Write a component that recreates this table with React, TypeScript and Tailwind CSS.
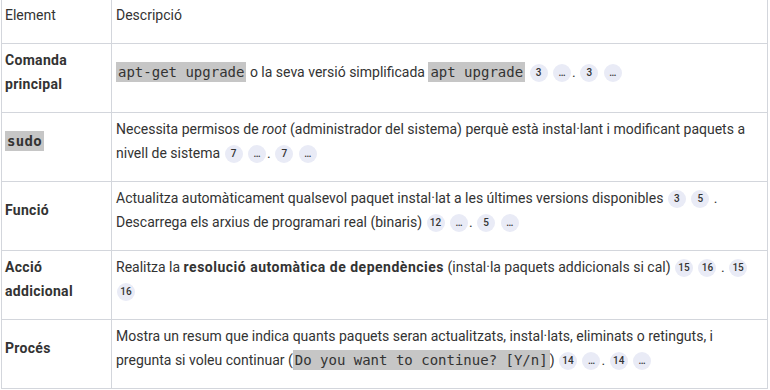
import React from "react";

const Badge = ({ children }: { children: React.ReactNode }) => (
  <span className="inline-flex items-center justify-center align-middle min-w-[18px] h-[18px] px-[3px] mx-px rounded-full bg-[#e9ebf6] text-[10px] leading-none font-medium text-[#333]">
    {children}
  </span>
);

const Code = ({ children, bold }: { children: React.ReactNode; bold?: boolean }) => (
  <code
    className={`bg-[#c6c6c6] text-[#333] px-[2px] py-[2px] text-[14px] ${bold ? "font-bold" : ""}`}
    style={{ fontFamily: '"DejaVu Sans Mono", monospace' }}
  >
    {children}
  </code>
);

const Label = ({ children }: { children: React.ReactNode }) => (
  <td className="w-[110px] border border-[#d3d6dc] pl-[3px] pr-[3px] pt-[4px] pb-[16px] align-middle font-bold tracking-[0.3px]">
    {children}
  </td>
);

const Desc = ({ children }: { children: React.ReactNode }) => (
  <td className="border border-[#d3d6dc] pl-[4px] pr-[3px] pt-[4px] pb-[16px] align-middle">{children}</td>
);

export default function App() {
  return (
    <div
      className="bg-white pl-px -mt-[2px] text-[14px] leading-[24px] text-[#333]"
      style={{ fontFamily: 'Roboto, "Liberation Sans", sans-serif' }}
    >
      <table className="w-[767px] border-collapse">
        <thead>
          <tr>
            <th className="w-[110px] border border-[#d3d6dc] pl-[3px] pr-[3px] pt-[4px] pb-[16px] text-left font-normal align-middle">
              Element
            </th>
            <th className="border border-[#d3d6dc] pl-[4px] pr-[3px] pt-[4px] pb-[16px] text-left font-normal align-middle">
              Descripció
            </th>
          </tr>
        </thead>
        <tbody>
          <tr>
            <Label>Comanda principal</Label>
            <Desc>
              <Code>apt-get upgrade</Code> o la seva versió simplificada <Code>apt upgrade</Code>{" "}
              <Badge>3</Badge> <Badge>…</Badge>. <Badge>3</Badge> <Badge>…</Badge>
            </Desc>
          </tr>
          <tr>
            <Label>
              <Code bold>sudo</Code>
            </Label>
            <Desc>
              Necessita permisos de <em>root</em> (administrador del sistema) perquè està instal·lant i
              modificant paquets a nivell de sistema <Badge>7</Badge> <Badge>…</Badge>. <Badge>7</Badge>{" "}
              <Badge>…</Badge>
            </Desc>
          </tr>
          <tr>
            <Label>Funció</Label>
            <Desc>
              Actualitza automàticament qualsevol paquet instal·lat a les últimes versions disponibles{" "}
              <Badge>3</Badge> <Badge>5</Badge> . Descarrega els arxius de programari real (binaris){" "}
              <Badge>12</Badge> <Badge>…</Badge>. <Badge>5</Badge> <Badge>…</Badge>
            </Desc>
          </tr>
          <tr>
            <Label>Acció addicional</Label>
            <Desc>
              Realitza la{" "}
              <strong className="font-bold tracking-[0.5px]">resolució automàtica de dependències</strong>{" "}
              (instal·la paquets addicionals si cal) <Badge>15</Badge> <Badge>16</Badge> . <Badge>15</Badge>{" "}
              <Badge>16</Badge>
            </Desc>
          </tr>
          <tr>
            <Label>Procés</Label>
            <Desc>
              Mostra un resum que indica quants paquets seran actualitzats, instal·lats, eliminats o
              retinguts, i pregunta si voleu continuar (<Code>Do you want to continue? [Y/n]</Code>){" "}
              <Badge>14</Badge> <Badge>…</Badge>. <Badge>14</Badge> <Badge>…</Badge>
            </Desc>
          </tr>
        </tbody>
      </table>
    </div>
  );
}
